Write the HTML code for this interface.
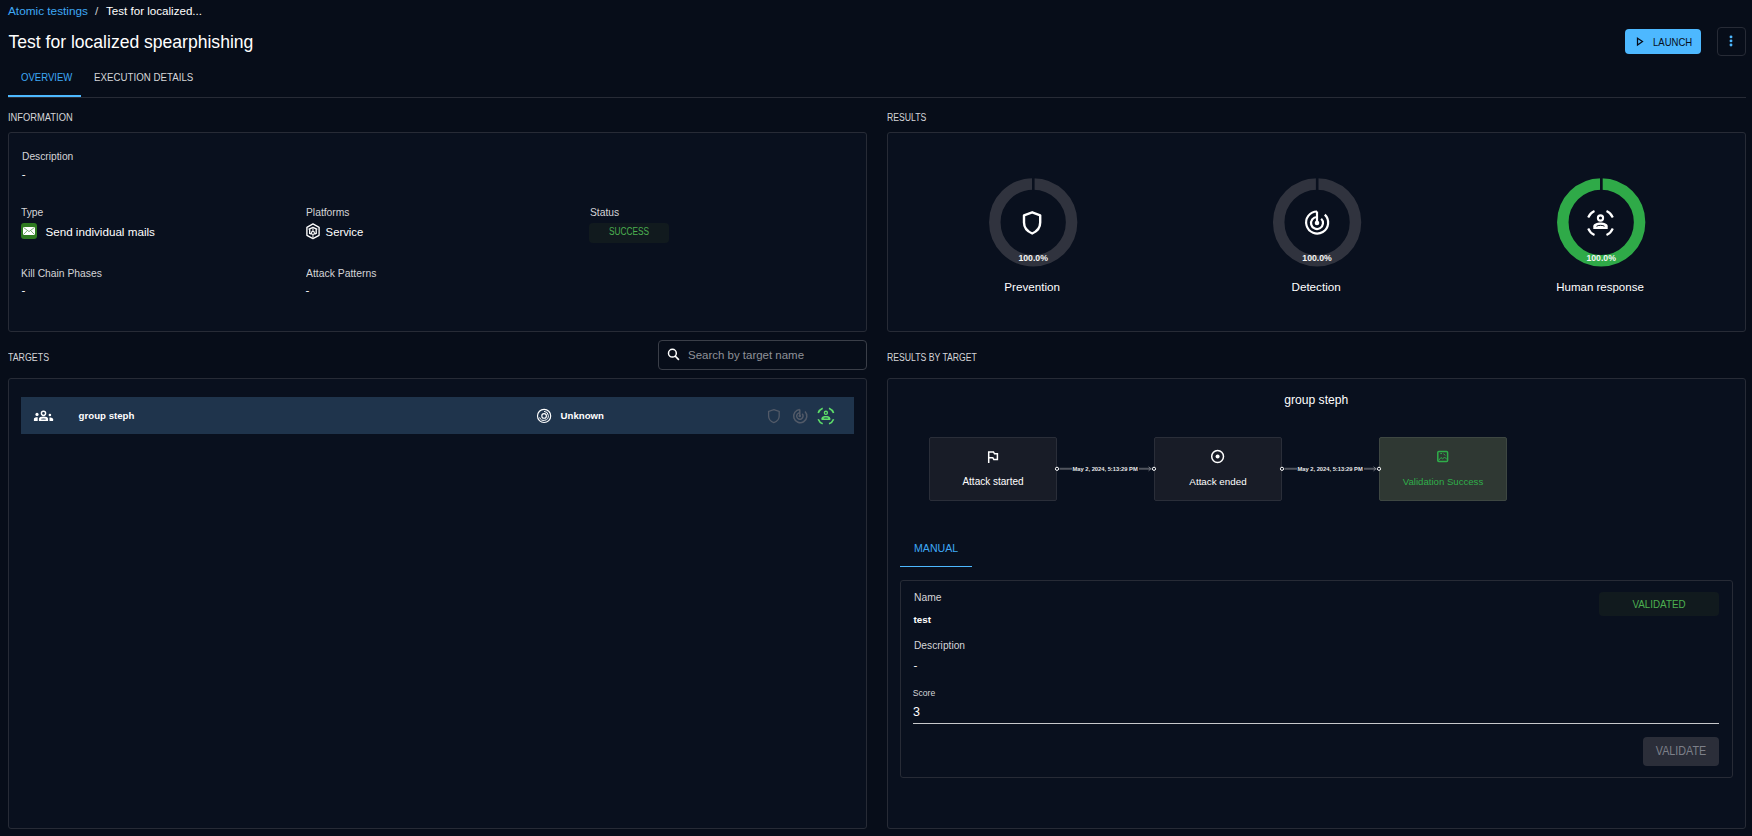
<!DOCTYPE html>
<html><head><meta charset="utf-8">
<style>
html,body{margin:0;padding:0;width:1752px;height:836px;overflow:hidden;background:#070d19;}
body{position:relative;font-family:"Liberation Sans",sans-serif;color:#fff;}
.t{position:absolute;white-space:nowrap;line-height:1;}
.b{position:absolute;box-sizing:border-box;}
.panel{position:absolute;box-sizing:border-box;border:1px solid #272b36;border-radius:3px;background:#09101e;}
.lbl{color:#d5d5d8;}
svg{position:absolute;overflow:visible;}
</style></head><body>

<!-- breadcrumb -->
<div class="t" style="left:8px;top:6px;font-size:11.8px;color:#3ea8f5;">Atomic testings</div>
<div class="t" style="left:95px;top:6px;font-size:11.8px;color:#cfd0d4;">/</div>
<div class="t" style="left:106px;top:4.8px;font-size:11.6px;color:#fff;">Test for localized...</div>

<!-- title -->
<div class="t" style="left:8.5px;top:33.6px;font-size:17.56px;color:#fff;">Test for localized spearphishing</div>

<!-- launch button -->
<div class="b" style="left:1625px;top:29px;width:76px;height:25px;background:#4db8ff;border-radius:4px;"></div>
<svg style="left:1636px;top:37px" width="8" height="9" viewBox="0 0 8 9"><path d="M1.5 1.2 L6.5 4.6 L1.5 8 Z" fill="none" stroke="#070d19" stroke-width="1.25" stroke-linejoin="miter"/></svg>
<div class="t" style="left:1652.7px;top:37.5px;font-size:10.47px;color:#070d19;transform:scaleX(.911);transform-origin:0 0;">LAUNCH</div>
<!-- kebab -->
<div class="b" style="left:1717px;top:27px;width:29px;height:29px;border:1px solid #272b36;border-radius:4px;"></div>
<svg style="left:1725px;top:32px" width="12" height="18" viewBox="1725 32 12 18"><g fill="#4db8ff"><circle cx="1731" cy="36.9" r="1.45"/><circle cx="1731" cy="40.9" r="1.45"/><circle cx="1731" cy="45" r="1.45"/></g></svg>

<!-- tabs -->
<div class="t" style="left:20.8px;top:73.1px;font-size:10.47px;color:#3ea8f5;transform:scaleX(.914);transform-origin:0 0;">OVERVIEW</div>
<div class="t" style="left:93.9px;top:73.1px;font-size:10.47px;color:#d5d5d8;transform:scaleX(.93);transform-origin:0 0;">EXECUTION DETAILS</div>
<div class="b" style="left:8px;top:97px;width:1738px;height:1px;background:#272b36;"></div>
<div class="b" style="left:8px;top:95px;width:73px;height:2px;background:#4db8ff;"></div>

<!-- INFORMATION -->
<div class="t lbl" style="left:8.4px;top:113.3px;font-size:10.32px;transform:scaleX(.905);transform-origin:0 0;">INFORMATION</div>
<div class="panel" style="left:8px;top:132px;width:859px;height:200px;"></div>
<div class="t lbl" style="left:21.7px;top:150.6px;font-size:10.8px;transform:scaleX(0.950);transform-origin:0 0;">Description</div>
<div class="t" style="left:21.7px;top:168px;font-size:11.6px;">-</div>
<div class="t lbl" style="left:21px;top:207.3px;font-size:10.8px;transform:scaleX(0.954);transform-origin:0 0;">Type</div>
<div class="t lbl" style="left:305.5px;top:207.3px;font-size:10.8px;transform:scaleX(0.954);transform-origin:0 0;">Platforms</div>
<div class="t lbl" style="left:589.5px;top:207.3px;font-size:10.8px;transform:scaleX(0.954);transform-origin:0 0;">Status</div>
<div class="t" style="left:45.4px;top:226px;font-size:11.67px;">Send individual mails</div>
<div class="t" style="left:325.6px;top:227px;font-size:11.31px;">Service</div>
<div class="b" style="left:589px;top:223px;width:80px;height:20px;background:#111a1e;border-radius:4px;"></div>
<div class="t" style="left:589px;width:80px;text-align:center;top:227.1px;font-size:10.47px;color:#4caf50;transform:scaleX(.793);">SUCCESS</div>
<div class="t lbl" style="left:21.4px;top:267.60px;font-size:10.8px;transform:scaleX(0.956);transform-origin:0 0;">Kill Chain Phases</div>
<div class="t lbl" style="left:305.5px;top:267.64px;font-size:10.8px;transform:scaleX(0.961);transform-origin:0 0;">Attack Patterns</div>
<div class="t" style="left:21.4px;top:284px;font-size:11.6px;">-</div>
<div class="t" style="left:305.5px;top:284px;font-size:11.6px;">-</div>

<!-- RESULTS -->
<div class="t lbl" style="left:886.8px;top:113.1px;font-size:10.47px;transform:scaleX(.828);transform-origin:0 0;">RESULTS</div>
<div class="panel" style="left:887px;top:132px;width:859px;height:200px;"></div>

<!-- TARGETS -->
<div class="t lbl" style="left:8px;top:353.4px;font-size:10.17px;transform:scaleX(.869);transform-origin:0 0;">TARGETS</div>
<div class="b" style="left:658px;top:340px;width:209px;height:30px;border:1px solid #3a3e48;border-radius:4px;"></div>
<div class="t" style="left:688px;top:349.8px;font-size:11.47px;color:#8f9198;">Search by target name</div>
<div class="panel" style="left:8px;top:378px;width:859px;height:451px;"></div>
<div class="b" style="left:21px;top:397px;width:833px;height:37px;background:#1f344c;"></div>
<div class="t" style="left:78.6px;top:411px;font-size:9.66px;font-weight:700;">group steph</div>
<div class="t" style="left:560.6px;top:411px;font-size:9.65px;font-weight:700;">Unknown</div>

<!-- RESULTS BY TARGET -->
<div class="t lbl" style="left:886.8px;top:352px;font-size:10.61px;transform:scaleX(.817);transform-origin:0 0;">RESULTS BY TARGET</div>
<div class="panel" style="left:887px;top:378px;width:859px;height:451px;"></div>
<div class="t" style="left:1284.3px;top:394px;font-size:12.1px;">group steph</div>


<!-- type icon (mail) -->
<div class="b" style="left:21px;top:223px;width:16px;height:16px;background:#2f7a20;border-radius:3px;"></div>
<svg style="left:21px;top:223px" width="16" height="16" viewBox="0 0 16 16"><rect x="2" y="4" width="12" height="8" fill="#fff"/><path d="M2.3 4.3 L8 8.6 L13.7 4.3 M2.3 11.7 L6.3 7.6 M13.7 11.7 L9.7 7.6" stroke="#5a9a50" stroke-width="0.8" fill="none"/></svg>
<!-- platform icon (hexagon) -->
<svg style="left:305px;top:222px" width="16" height="18" viewBox="0 0 16 18"><g fill="none" stroke="#fff" stroke-width="1.35" stroke-linejoin="round"><path d="M7.95 1.9 L14.1 5.3 L14.1 13.3 L7.95 16.6 L1.9 13.3 L1.9 5.3 Z"/><path d="M3.6 7.3 L7.95 5.3 L12.3 7.3"/><path d="M4.7 7.2 L4.7 11.4 L6.4 12.1 M11.2 7.2 L11.2 11.4 L9.5 12.1"/><circle cx="7.95" cy="10.9" r="1.5" stroke-width="1.1"/></g><path d="M7.95 5.5 L7.95 9.4 M7.95 12.4 L7.95 16.4" stroke="#d8d8d8" stroke-width="1.2"/></svg>

<!-- donuts -->
<svg style="left:0;top:0" width="1752" height="336" viewBox="0 0 1752 336">
 <g fill="none" stroke-width="11.5">
  <circle cx="1033.2" cy="222.3" r="38.4" stroke="#30333e"/>
  <circle cx="1317.1" cy="222.3" r="38.4" stroke="#30333e"/>
  <circle cx="1601.2" cy="222.3" r="38.4" stroke="#2faa48"/>
 </g>
 <g fill="#09101e">
  <rect x="1032" y="176" width="2.6" height="14"/>
  <rect x="1315.9" y="176" width="2.6" height="14"/>
  <rect x="1600" y="176" width="2.7" height="14"/>
 </g>
 <!-- shield -->
 <path d="M1032.2 212.3 L1040.2 215.3 L1040.2 222.5 C1040.2 227.5 1036.8 231.5 1032.2 233.5 C1027.6 231.5 1024 227.5 1024 222.5 L1024 215.3 Z" fill="none" stroke="#fff" stroke-width="2.4" stroke-linejoin="round"/>
 <!-- radar -->
 <g fill="none" stroke="#fff" stroke-width="2.2" stroke-linecap="butt">
  <path d="M1317 211.5 A11 11 0 1 0 1324.8 214.6"/>
  <path d="M1317 217 A6 6 0 1 0 1321.2 218.7"/>
  <path d="M1317 211.5 L1317 223"/>
 </g>
 <circle cx="1317" cy="223" r="2.3" fill="#fff"/>
 <!-- human response -->
 <g fill="none" stroke="#fff" stroke-width="2.1">
  <path d="M1588.2 217.5 A12.2 12.2 0 0 1 1594.5 211"/>
  <path d="M1606.5 211 A12.2 12.2 0 0 1 1612.8 217.5"/>
  <path d="M1612.8 228.5 A12.2 12.2 0 0 1 1606.5 235"/>
  <path d="M1594.5 235 A12.2 12.2 0 0 1 1588.2 228.5"/>
  <circle cx="1600.5" cy="218" r="2.6"/>
 </g>
 <path d="M1593.3 229 L1593.3 226.2 C1593.3 223.5 1597 222.4 1600.5 222.4 C1604 222.4 1607.7 223.5 1607.7 226.2 L1607.7 229 Z" fill="#fff"/>
 <path d="M1596.5 226.3 C1598 225 1603 225 1604.5 226.3" stroke="#09101e" stroke-width="1" fill="none"/>
</svg>
<div class="t" style="left:983.2px;width:100px;text-align:center;top:254px;font-size:8.7px;font-weight:700;color:#f4f4f4;">100.0%</div>
<div class="t" style="left:1267.1px;width:100px;text-align:center;top:254px;font-size:8.7px;font-weight:700;color:#f4f4f4;">100.0%</div>
<div class="t" style="left:1551.2px;width:100px;text-align:center;top:254px;font-size:8.7px;font-weight:700;color:#f4f4f4;">100.0%</div>
<div class="t" style="left:932.2px;width:200px;text-align:center;top:280.5px;font-size:11.65px;">Prevention</div>
<div class="t" style="left:1216.1px;width:200px;text-align:center;top:280.5px;font-size:11.65px;">Detection</div>
<div class="t" style="left:1500px;width:200px;text-align:center;top:282px;font-size:11.5px;">Human response</div>

<!-- search icon -->
<svg style="left:664px;top:346px" width="18" height="18" viewBox="0 0 18 18"><circle cx="8.4" cy="7.2" r="3.9" fill="none" stroke="#fff" stroke-width="1.5"/><path d="M11.1 10 L14.9 13.9" stroke="#fff" stroke-width="1.7"/></svg>

<!-- row icons -->
<svg style="left:0;top:396px" width="870" height="40" viewBox="0 396 870 40">
 <g fill="#fff">
  <circle cx="43.5" cy="413.3" r="2.1" fill="none" stroke="#fff" stroke-width="1.4"/>
  <path d="M38.9 421 L38.9 418.8 C38.9 417.2 41.2 416.5 43.5 416.5 C45.8 416.5 48.1 417.2 48.1 418.8 L48.1 421 Z"/>
  <ellipse cx="43.5" cy="419" rx="2.6" ry="0.6" fill="#1f344c"/>
  <circle cx="37" cy="414.4" r="1.6"/>
  <path d="M33.9 421 L33.9 419 C33.9 417.8 35.2 417.2 37.7 417.2 L37.7 421 Z"/>
  <circle cx="49.9" cy="415" r="1.3"/>
  <path d="M49.5 417.6 C51.5 417.6 53.1 418.2 53.1 419.2 L53.1 421 L49.5 421 Z"/>
 </g>
 <g fill="none" stroke="#fff" stroke-width="1.15">
  <circle cx="544.1" cy="415.9" r="6.6"/>
  <circle cx="544.1" cy="415.9" r="2.3"/>
  <path d="M544 411.4 A4.5 4.5 0 1 1 539.6 417.4" stroke-width="1"/>
 </g>
 <!-- gray shield -->
 <path d="M773.8 409.6 L779.2 411.4 L779.2 416 C779.2 419.2 776.8 421.6 773.8 422.6 C770.8 421.6 768.6 419.2 768.6 416 L768.6 411.4 Z" fill="none" stroke="#525a68" stroke-width="1.3"/>
 <g fill="none" stroke="#525a68" stroke-width="1.5">
  <path d="M799.8 409.5 A6.6 6.6 0 1 0 805 411.5"/>
  <path d="M799.8 412.8 A3.2 3.2 0 1 0 802.2 413.8"/>
  <path d="M799.8 409.5 L799.8 416"/>
 </g>
 <circle cx="799.8" cy="416" r="1.3" fill="#525a68"/>
 <g fill="none" stroke="#5ede6a" stroke-width="1.6">
  <path d="M818.2 413 A8.2 8.2 0 0 1 822.7 408.3"/>
  <path d="M829 408.3 A8.2 8.2 0 0 1 833.6 413"/>
  <path d="M833.6 419.2 A8.2 8.2 0 0 1 829 423.8"/>
  <path d="M822.7 423.8 A8.2 8.2 0 0 1 818.2 419.2"/>
  <circle cx="825.9" cy="412.8" r="1.55" stroke-width="1.3"/>
 </g>
 <path d="M821.5 420 L821.5 418.3 C821.5 416.6 823.7 416 825.9 416 C828.1 416 830.3 416.6 830.3 418.3 L830.3 420 Z" fill="#5ede6a"/><ellipse cx="825.9" cy="418" rx="2.4" ry="0.55" fill="#1f344c"/>
</svg>

<!-- timeline boxes -->
<div class="b" style="left:929px;top:437px;width:128px;height:64px;background:#181c27;border:1px solid #2a2e39;border-radius:2px;"></div>
<div class="b" style="left:1154px;top:437px;width:128px;height:64px;background:#181c27;border:1px solid #2a2e39;border-radius:2px;"></div>
<div class="b" style="left:1379px;top:437px;width:128px;height:64px;background:#2f3833;border:1px solid #3e4742;border-radius:2px;"></div>
<div class="t" style="left:929px;width:128px;text-align:center;top:477px;font-size:10px;">Attack started</div>
<div class="t" style="left:1154px;width:128px;text-align:center;top:477px;font-size:9.82px;">Attack ended</div>
<div class="t" style="left:1379px;width:128px;text-align:center;top:477px;font-size:9.62px;color:#2fae4a;">Validation Success</div>
<svg style="left:0;top:0" width="1752" height="520" viewBox="0 0 1752 520">
 <!-- flag -->
 <path d="M988.7 463 L988.7 452 L993.5 452 L994.5 453.8 L997.4 453.8 L997.4 459.5 L993.8 459.5 L992.8 457.7 L988.7 457.7" fill="none" stroke="#fff" stroke-width="1.5"/>
 <!-- target -->
 <circle cx="1217.6" cy="456.5" r="5.9" fill="none" stroke="#fff" stroke-width="1.5"/>
 <circle cx="1217.6" cy="456.5" r="2" fill="#fff"/>
 <!-- validation -->
 <rect x="1437.8" y="451.6" width="9.8" height="9.8" rx="1" fill="none" stroke="#2fae4a" stroke-width="1.5"/>
 <path d="M1438.5 460.5 L1441 457.5 L1442.6 459 L1444.5 457 L1447 459.5" fill="none" stroke="#2fae4a" stroke-width="1"/>
 <path d="M1440.3 453.6 L1442 453.6 M1443.5 453.6 L1445.2 455.5" stroke="#2fae4a" stroke-width="1" fill="none"/>
 <!-- edges -->
 <g stroke="#50545e" stroke-width="2">
  <path d="M1059.5 468.8 L1072 468.8 M1139 468.8 L1151.5 468.8"/>
  <path d="M1284.5 468.8 L1297 468.8 M1364 468.8 L1376.5 468.8"/>
 </g>
 <g fill="#09101e" stroke="#fff" stroke-width="1">
  <circle cx="1057" cy="468.8" r="1.6"/>
  <circle cx="1154" cy="468.8" r="1.6"/>
  <circle cx="1282" cy="468.8" r="1.6"/>
  <circle cx="1379" cy="468.8" r="1.6"/>
 </g>
 <path d="M1148.6 466.8 L1150.8 468.8 L1148.6 470.8 M1373.6 466.8 L1375.8 468.8 L1373.6 470.8" stroke="#8a8d95" stroke-width="0.9" fill="none"/>
</svg>
<div class="t" style="left:1072.5px;top:466.7px;font-size:5.76px;font-weight:700;color:#e8e8ea;">May 2, 2024, 5:13:29 PM</div>
<div class="t" style="left:1297.5px;top:466.7px;font-size:5.76px;font-weight:700;color:#e8e8ea;">May 2, 2024, 5:13:29 PM</div>

<!-- manual tab -->
<div class="t" style="left:913.7px;top:542px;font-size:11.77px;color:#3ea8f5;transform:scaleX(.901);transform-origin:0 0;">MANUAL</div>
<div class="b" style="left:900px;top:565.6px;width:72px;height:1.5px;background:#4db8ff;"></div>
<div class="panel" style="left:900px;top:580px;width:833px;height:198px;"></div>
<div class="t lbl" style="left:913.5px;top:592.18px;font-size:10.8px;transform:scaleX(0.954);transform-origin:0 0;">Name</div>
<div class="t" style="left:913.5px;top:615px;font-size:9.8px;font-weight:700;">test</div>
<div class="t lbl" style="left:913.5px;top:640.29px;font-size:10.8px;transform:scaleX(0.944);transform-origin:0 0;">Description</div>
<div class="t" style="left:913.5px;top:659px;font-size:11.6px;">-</div>
<div class="t lbl" style="left:912.8px;top:689.2px;font-size:8.6px;">Score</div>
<div class="t" style="left:913px;top:705.5px;font-size:12.5px;">3</div>
<div class="b" style="left:913px;top:722.5px;width:806px;height:1px;background:#c8c9cc;"></div>
<div class="b" style="left:1599px;top:592px;width:120px;height:24px;background:#111a1e;border-radius:4px;"></div>
<div class="t" style="left:1599px;width:120px;text-align:center;top:600.4px;font-size:10.17px;color:#4caf50;transform:scaleX(.969);">VALIDATED</div>
<div class="b" style="left:1643px;top:737px;width:76px;height:29px;background:#2b2e39;border-radius:4px;"></div>
<div class="t" style="left:1643px;width:76px;text-align:center;top:746.2px;font-size:11.92px;color:#7d8089;transform:scaleX(.904);">VALIDATE</div>
</body></html>
